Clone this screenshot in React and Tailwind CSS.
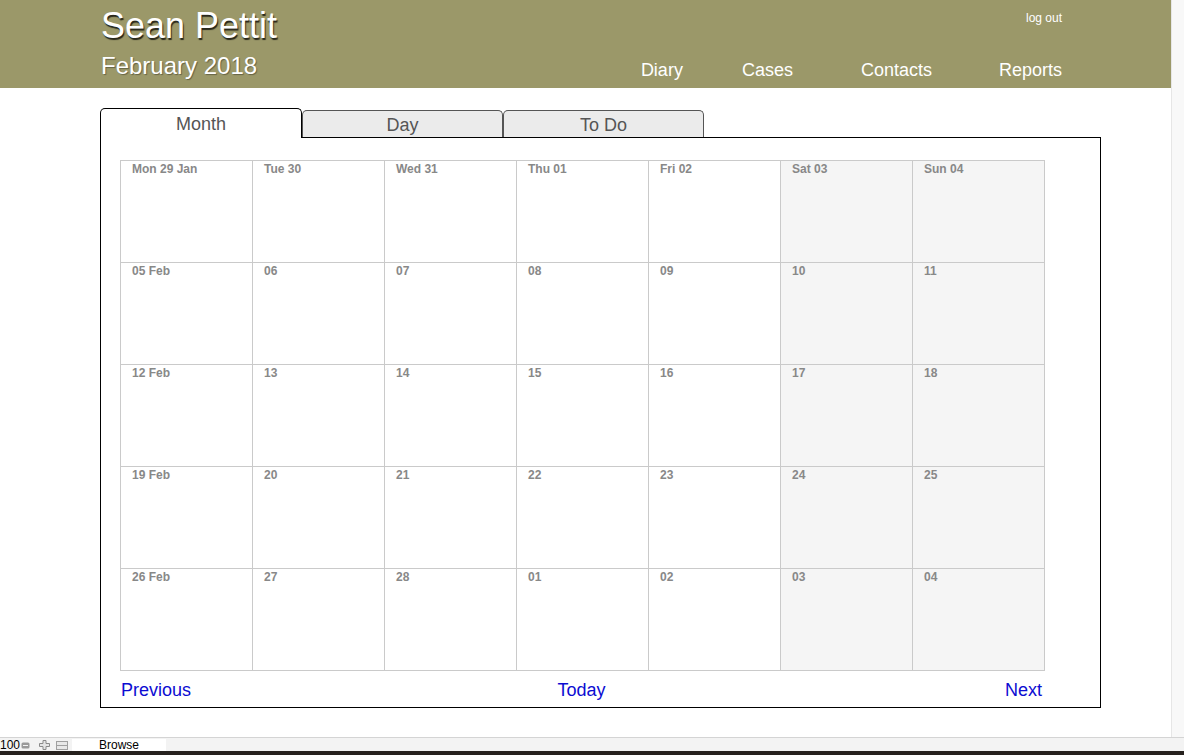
import React from 'react';

const WEEKS = [
  ['Mon 29 Jan', 'Tue 30', 'Wed 31', 'Thu 01', 'Fri 02', 'Sat 03', 'Sun 04'],
  ['05 Feb', '06', '07', '08', '09', '10', '11'],
  ['12 Feb', '13', '14', '15', '16', '17', '18'],
  ['19 Feb', '20', '21', '22', '23', '24', '25'],
  ['26 Feb', '27', '28', '01', '02', '03', '04'],
];

const NAV = [
  { label: 'Diary', cls: '' },
  { label: 'Cases', cls: 'ml-[59px]' },
  { label: 'Contacts', cls: 'ml-[68px]' },
  { label: 'Reports', cls: 'ml-[67px]' },
];

const Header = () => (
  <header className="h-[88px] bg-[#9b9869]">
    <div className="ml-[101px] flex w-[961px] justify-between">
      <div className="pt-[5px] text-white">
        <h1 className="text-[36px] leading-[41px] [text-shadow:1px_2px_1px_rgba(0,0,0,0.75)]">Sean Pettit</h1>
        <h2 className="mt-[6px] text-[24px] leading-[27px] [text-shadow:1px_1px_1px_rgba(0,0,0,0.35)]">February 2018</h2>
      </div>
      <div className="flex flex-col items-end pt-[11px] text-white">
        <a className="text-[12px] leading-[14px]">log out</a>
        <nav className="mt-[35px] flex text-[18px] leading-[21px]">
          {NAV.map((n) => (
            <a key={n.label} className={n.cls}>{n.label}</a>
          ))}
        </nav>
      </div>
    </div>
  </header>
);

const Tabs = () => (
  <div className="flex items-end text-[18px] leading-[21px] text-[#555]">
    <div className="relative z-10 -mb-px h-[30px] w-[202px] rounded-t-[5px] border-x border-t border-black bg-white pt-[5px] text-center">
      Month
    </div>
    <div className="h-[27px] w-[201px] rounded-t-[5px] border-x border-t border-[#555] bg-[#ebebeb] pt-[4px] text-center">
      Day
    </div>
    <div className="h-[27px] w-[201px] rounded-t-[5px] border-x border-t border-[#555] bg-[#ebebeb] pt-[4px] text-center">
      To Do
    </div>
  </div>
);

const MonthGrid = () => (
  <div className="grid w-[925px] grid-cols-7 border-l border-t border-[#cacaca]">
    {WEEKS.flat().map((label, i) => {
      const weekend = i % 7 >= 5;
      return (
        <div
          key={i}
          className={`h-[102px] border-b border-r border-[#cacaca] pl-[11px] pt-[1px] text-[12px] font-bold leading-[14px] text-[#888] ${
            weekend ? 'bg-[#f5f5f5]' : 'bg-white'
          }`}
        >
          {label}
        </div>
      );
    })}
  </div>
);

const StatusBar = () => (
  <div className="flex h-[14px] items-center border-t border-[#d4d4d4] bg-[#f3f3f3] pt-[1px] text-[12px] leading-[12px] text-black">
    <span className="w-[21px]">100</span>
    {/* zoom out */}
    <svg width="9" height="7" viewBox="0 0 9 7">
      <rect x="0.5" y="0.5" width="8" height="6" rx="1.5" fill="#9a9a9a" />
      <rect x="2" y="3" width="5" height="1" fill="#f3f3f3" />
    </svg>
    {/* zoom in */}
    <svg width="11" height="10" viewBox="0 0 11 10" className="ml-[9px]">
      <path d="M4 0.5h3v3h3.5v3H7v3H4v-3H0.5v-3H4z" fill="#e4e4e4" stroke="#8a8a8a" />
    </svg>
    {/* page mode */}
    <svg width="12" height="9" viewBox="0 0 12 9" className="ml-[6px]">
      <rect x="0.5" y="0.5" width="11" height="8" fill="#e8e8e8" stroke="#a0a0a0" />
      <line x1="1" y1="4.5" x2="11" y2="4.5" stroke="#a0a0a0" />
    </svg>
    <div className="ml-[4px] flex h-full w-[94px] items-center justify-center bg-white">Browse</div>
  </div>
);

export default function App() {
  return (
    <div className="flex h-[755px] w-[1184px] flex-col overflow-hidden bg-white font-['Liberation_Sans',Arial,sans-serif]">
      <div className="flex h-[737px]">
        <div className="w-[1171px]">
          <Header />
          <div className="ml-[100px] mt-[20px] w-[1001px]">
            <Tabs />
            <div className="border border-black pl-[19px] pt-[22px]">
              <MonthGrid />
              <div className="grid h-[36px] w-[925px] grid-cols-3 pl-[1px] pr-[3px] pt-[9px] text-[18px] leading-[21px] text-[#0c0cd2]">
                <a className="text-left">Previous</a>
                <a className="text-center">Today</a>
                <a className="text-right">Next</a>
              </div>
            </div>
          </div>
        </div>
        <div className="w-[13px] border-l border-[#e6e6e6] bg-[#f8f8f8]" />
      </div>
      <StatusBar />
      <div className="h-[4px] bg-[#26211e]" />
    </div>
  );
}
